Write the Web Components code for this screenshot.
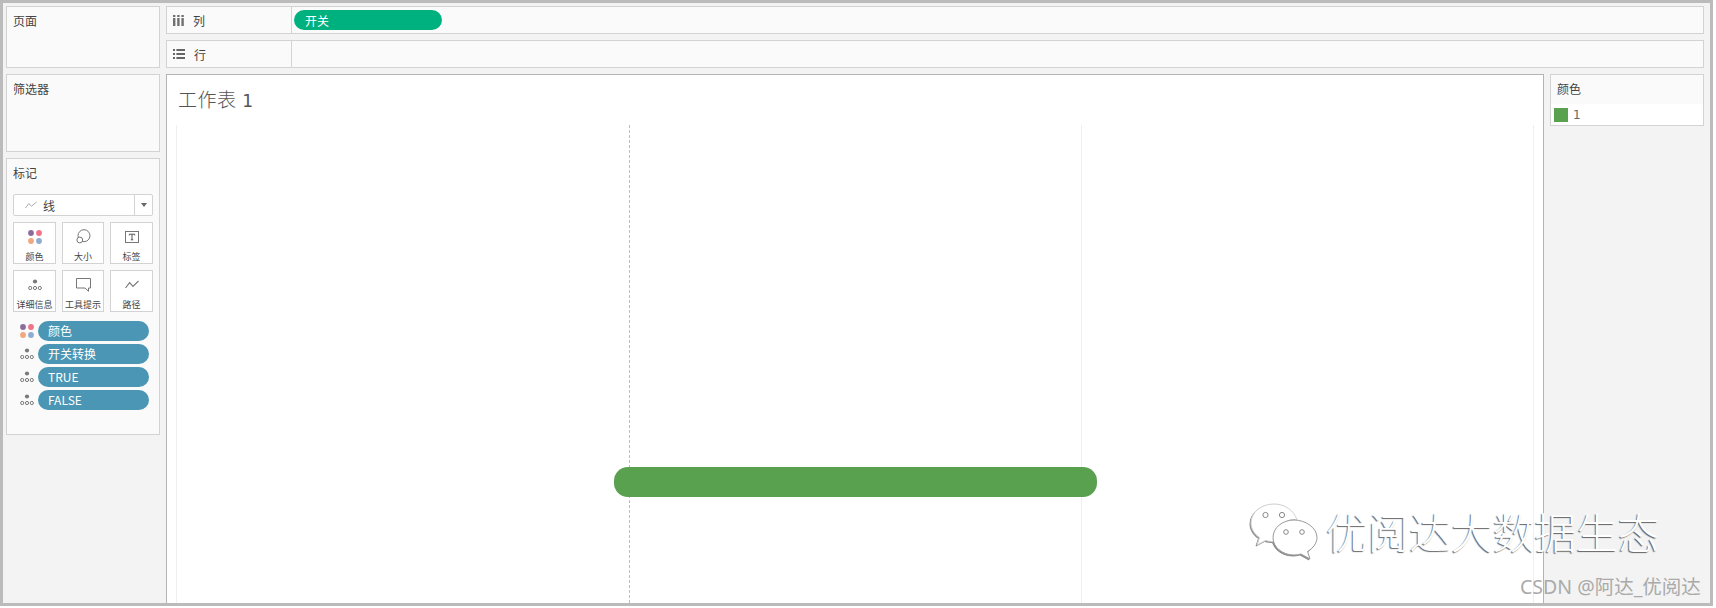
<!DOCTYPE html>
<html lang="zh">
<head>
<meta charset="utf-8">
<title>工作表 1</title>
<style>
    html, body { margin: 0; background: #fff; }
    body { font-family: "Noto Sans CJK SC", "Noto Sans", sans-serif; font-size: 12px; color: #333; }
</style>
</head>
<body>
<tab-app></tab-app>
<script>
const ICONS = {
    color: `<svg width="14" height="14" viewBox="0 0 14 14"><circle cx="3" cy="3" r="2.9" fill="#8a6d9c"/><circle cx="11" cy="3" r="2.9" fill="#f0738a"/><circle cx="3" cy="11" r="2.9" fill="#f3a77c"/><circle cx="11" cy="11" r="2.9" fill="#8fabd0"/></svg>`,
    detail: `<svg width="14" height="12" viewBox="0 0 14 12"><circle cx="7" cy="2.5" r="2.1" fill="#7a7a7a"/><g fill="none" stroke="#7a7a7a"><circle cx="2.2" cy="9" r="1.6"/><circle cx="7" cy="9" r="1.6"/><circle cx="11.8" cy="9" r="1.6"/></g></svg>`,
    size: `<svg width="16" height="16" viewBox="0 0 16 16" fill="none" stroke="#777"><circle cx="9" cy="6.700" r="6"/><circle cx="4.800" cy="11" r="2.900" fill="#fff"/></svg>`,
    label: `<svg width="14" height="12" viewBox="0 0 14 12"><rect x=".5" y=".5" width="13" height="11" fill="none" stroke="#777"/><path d="M4.3 4.400V3.200h5.400v1.200M7 3.200v5.600M5.800 8.800h2.400" fill="none" stroke="#555"/></svg>`,
    tooltip: `<svg width="15" height="14" viewBox="0 0 15 14"><path d="M.5.500h14v9.500h-2v3.300L9 10H.5z" fill="none" stroke="#777"/></svg>`,
    path: `<svg width="14" height="10" viewBox="0 0 14 10"><path d="M.5 8 4.600 2.600 8 6.400 13.500 1" fill="none" stroke="#777" stroke-width="1.100"/></svg>`,
    line: `<svg width="12" height="8" viewBox="0 0 12 8"><path d="M.5 7 3.800 2.600 6.600 5.200 11.500 1" fill="none" stroke="#aaa"/></svg>`,
    cols: `<svg width="11" height="11" viewBox="0 0 11 11" fill="#707070"><rect x="0" y="3" width="2.400" height="8"/><rect x="4.200" y="3" width="2.400" height="8"/><rect x="8.400" y="3" width="2.400" height="8"/><rect x="0" y="0" width="2.400" height="2"/><rect x="4.200" y="0" width="2.400" height="2"/><rect x="8.400" y="0" width="2.400" height="2"/></svg>`,
    rows: `<svg width="12" height="10" viewBox="0 0 12 10" fill="#666"><rect x="0" y="0" width="2" height="2"/><rect x="0" y="4" width="2" height="2"/><rect x="0" y="8" width="2" height="2"/><rect x="3.400" y="0" width="8.600" height="2"/><rect x="3.400" y="4" width="8.600" height="2"/><rect x="3.400" y="8" width="8.600" height="2"/></svg>`
};

// shelf row at the top: icon + caption, then the drop area
class ShelfRow extends HTMLElement {
    connectedCallback() {
        const icon = this.getAttribute('icon');
        const label = this.getAttribute('label');
        this.attachShadow({ mode: 'open' });
        this.shadowRoot.innerHTML = `
            <style>
                :host { display: grid; grid-template-columns: 125px 1fr; box-sizing: border-box; height: 28px; background: #fafafa; border: 1px solid #d3d3d3; }
                .head { display: flex; align-items: center; gap: 9px; padding-left: 6px; border-right: 1px solid #d3d3d3; font-size: 12px; color: #444; }
                .head svg { display: block; }
                .drop { display: flex; align-items: center; padding-left: 2px; }
            </style>
            <div class="head">${ICONS[icon]}<span>${label}</span></div>
            <div class="drop"><slot></slot></div>
        `;
    }
}

class ShelfPill extends HTMLElement {
    connectedCallback() {
        this.attachShadow({ mode: 'open' });
        this.shadowRoot.innerHTML = `
            <style>
                :host { display: flex; align-items: center; box-sizing: border-box; width: 148px; height: 20px; padding-left: 11px; border-radius: 10px; background: #00b180; color: #fff; font-size: 12px; }
            </style>
            <slot></slot>
        `;
    }
}

class SideCard extends HTMLElement {
    connectedCallback() {
        this.attachShadow({ mode: 'open' });
        this.shadowRoot.innerHTML = `
            <style>
                :host { display: block; box-sizing: border-box; height: var(--h, auto); padding: 5px 6px; background: #fafafa; border: 1px solid #d3d3d3; }
                .title { font-size: 12px; line-height: 18px; color: #444; }
            </style>
            <div class="title">${this.getAttribute('title-text')}</div>
            <slot></slot>
        `;
    }
}

class MarkDropdown extends HTMLElement {
    connectedCallback() {
        this.attachShadow({ mode: 'open' });
        this.shadowRoot.innerHTML = `
            <style>
                :host { display: grid; grid-template-columns: 1fr 17px; box-sizing: border-box; height: 22px; margin-top: 12px; background: #fff; border: 1px solid #d3d3d3; border-radius: 2px; }
                .val { display: flex; align-items: center; gap: 6px; padding-left: 11px; border-right: 1px solid #d3d3d3; color: #444; font-size: 12px; }
                .arrow { display: flex; align-items: center; justify-content: center; }
                .arrow i { width: 0; height: 0; border: 3.500px solid transparent; border-top: 4px solid #666; border-bottom: 0; }
            </style>
            <div class="val">${ICONS.line}<span>线</span></div>
            <div class="arrow"><i></i></div>
        `;
    }
}

class MarkButton extends HTMLElement {
    connectedCallback() {
        this.attachShadow({ mode: 'open' });
        this.shadowRoot.innerHTML = `
            <style>
                :host { display: flex; flex-direction: column; align-items: center; box-sizing: border-box; height: 42px; padding-top: 1px; background: #fff; border: 1px solid #d3d3d3; white-space: nowrap; }
                .ico { display: flex; align-items: center; justify-content: center; height: 26px; }
                .cap { font-size: 9px; line-height: 13px; color: #444; }
            </style>
            <div class="ico">${ICONS[this.getAttribute('icon')]}</div>
            <div class="cap"><slot></slot></div>
        `;
    }
}

class MarkField extends HTMLElement {
    connectedCallback() {
        this.attachShadow({ mode: 'open' });
        this.shadowRoot.innerHTML = `
            <style>
                :host { display: grid; grid-template-columns: 25px 111px; align-items: center; height: 20px; }
                .ico { display: flex; justify-content: center; padding-left: 3px; }
                .pill { display: flex; align-items: center; box-sizing: border-box; height: 20px; padding: 0 0 2px 10px; border-radius: 10px; background: #4a96b4; color: #fff; font-size: 12px; }
            </style>
            <div class="ico">${ICONS[this.getAttribute('icon')]}</div>
            <div class="pill"><slot></slot></div>
        `;
    }
}

class LegendCard extends HTMLElement {
    connectedCallback() {
        this.attachShadow({ mode: 'open' });
        this.shadowRoot.innerHTML = `
            <style>
                :host { display: block; box-sizing: border-box; height: 52px; background: #fafafa; border: 1px solid #d3d3d3; }
                .head { height: 29px; padding: 5px 6px 0; box-sizing: border-box; font-size: 12px; line-height: 18px; color: #444; }
                .row { display: flex; align-items: center; gap: 5px; height: 21px; padding-left: 3px; background: #fff; color: #666; font-family: "DejaVu Sans", sans-serif; font-size: 12px; }
                .sw { width: 14px; height: 14px; background: #59a14f; }
            </style>
            <div class="head">颜色</div>
            <div class="row"><span class="sw"></span><span>1</span></div>
        `;
    }
}

// the worksheet: title, pane lines, the one bar
class VizView extends HTMLElement {
    connectedCallback() {
        this.attachShadow({ mode: 'open' });
        this.shadowRoot.innerHTML = `
            <style>
                :host { display: flex; flex-direction: column; box-sizing: border-box; height: 529px; background: #fff; border: 1px solid #b4b4b4; border-bottom: 0; overflow: hidden; }
                .title { height: 50px; box-sizing: border-box; padding: 11px 0 0 11px; font-weight: 300; font-size: 19px; line-height: 26px; letter-spacing: .5px; color: #555; }
                .title b { font-family: "DejaVu Sans", sans-serif; font-weight: 400; font-size: 17px; margin-left: 1px; }
                .panes { position: relative; flex: 1; margin: 0 9px; display: grid; grid-template-columns: 452px 453px 1fr; border-left: 1px solid #efefef; border-right: 1px solid #efefef; }
                .p2 { box-sizing: border-box; border-left: 1px dashed #bdbdbd; border-right: 1px solid #efefef; }
                .bar { position: absolute; left: 437px; top: 342px; width: 483px; height: 30px; border-radius: 14px; background: #59a14f; }
            </style>
            <div class="title">工作表 <b>1</b></div>
            <div class="panes"><div></div><div class="p2"></div><div></div><div class="bar"></div></div>
        `;
    }
}

class WaterMark extends HTMLElement {
    connectedCallback() {
        this.attachShadow({ mode: 'open' });
        this.shadowRoot.innerHTML = `
            <style>
                :host { position: absolute; left: 0; top: 0; width: 1716px; height: 608px; pointer-events: none; }
                .logo { position: absolute; left: 1250px; top: 502px; filter: drop-shadow(-1px 1px .6px rgba(0,0,0,.45)); }
                .brand { position: absolute; left: 1326px; top: 501px; font-size: 41.700px; line-height: 60px; font-weight: 300; color: #fff; white-space: nowrap; text-shadow: -1px 1px 1px rgba(0,0,0,.6); }
                .csdn { position: absolute; left: 1520px; top: 574px; font-family: "Noto Sans", "Noto Sans CJK SC", sans-serif; font-size: 19.500px; line-height: 26px; color: #aaa; white-space: nowrap; }
            </style>
            <svg class="logo" width="68" height="58" viewBox="0 0 68 58">
                <path d="M24 2C11 2 1 10.500 1 21c0 6 3.300 11 8.500 14.600L7 43l8.500-4.500c2.600.7 5.300 1.100 8.500 1.100 1 0 2 0 3-.1C25.500 25 37 15.500 47 18 44 8.500 35 2 24 2z" fill="#fff" stroke="#cfcfcf"/>
                <path d="M44 18c-11.600 0-21 7.800-21 17.500S32.400 53 44 53c2.400 0 4.700-.3 6.900-1L60 57l-2.400-7.500C63.300 46 67 41 67 35.500 67 25.800 55.600 18 44 18z" fill="#fff" stroke="#999"/>
                <g fill="#fff" stroke="#888"><circle cx="15.500" cy="13" r="2.600"/><circle cx="32" cy="13" r="2.600"/><circle cx="36" cy="30" r="2.300"/><circle cx="52" cy="30" r="2.300"/></g>
            </svg>
            <div class="brand">优阅达大数据生态</div>
            <div class="csdn">CSDN @阿达_优阅达</div>
        `;
    }
}

class TabApp extends HTMLElement {
    connectedCallback() {
        this.attachShadow({ mode: 'open' });
        this.shadowRoot.innerHTML = `
            <style>
                :host { display: block; position: relative; width: 1716px; height: 608px; overflow: hidden; }
                .frame { box-sizing: border-box; width: 1713px; height: 606px; border: 3px solid #bbb; padding: 3px 0 0 3px; background: #f3f3f3; overflow: hidden; display: grid; grid-template-columns: 154px 1378px 154px; grid-template-rows: 28px 28px 529px; gap: 6px; }
                .pages { grid-column: 1; grid-row: 1 / 3; --h: 62px; }
                .top { grid-column: 2 / 4; }
                .left { grid-column: 1; grid-row: 3; display: flex; flex-direction: column; gap: 6px; }
                .filters { --h: 78px; }
                .marks { --h: 277px; }
                .btns { display: grid; grid-template-columns: 43px 42px 43px; gap: 6px; margin-top: 6px; }
                .fields { display: flex; flex-direction: column; gap: 3px; margin-top: 9px; }
            </style>
            <div class="frame">
                <side-card class="pages" title-text="页面"></side-card>
                <shelf-row class="top" icon="cols" label="列"><shelf-pill>开关</shelf-pill></shelf-row>
                <shelf-row class="top" icon="rows" label="行"></shelf-row>
                <div class="left">
                    <side-card class="filters" title-text="筛选器"></side-card>
                    <side-card class="marks" title-text="标记">
                        <mark-dropdown></mark-dropdown>
                        <div class="btns">
                            <mark-button icon="color">颜色</mark-button>
                            <mark-button icon="size">大小</mark-button>
                            <mark-button icon="label">标签</mark-button>
                            <mark-button icon="detail">详细信息</mark-button>
                            <mark-button icon="tooltip">工具提示</mark-button>
                            <mark-button icon="path">路径</mark-button>
                        </div>
                        <div class="fields">
                            <mark-field icon="color">颜色</mark-field>
                            <mark-field icon="detail">开关转换</mark-field>
                            <mark-field icon="detail">TRUE</mark-field>
                            <mark-field icon="detail">FALSE</mark-field>
                        </div>
                    </side-card>
                </div>
                <viz-view></viz-view>
                <legend-card></legend-card>
            </div>
            <water-mark></water-mark>
        `;
    }
}

customElements.define('shelf-row', ShelfRow);
customElements.define('shelf-pill', ShelfPill);
customElements.define('side-card', SideCard);
customElements.define('mark-dropdown', MarkDropdown);
customElements.define('mark-button', MarkButton);
customElements.define('mark-field', MarkField);
customElements.define('legend-card', LegendCard);
customElements.define('viz-view', VizView);
customElements.define('water-mark', WaterMark);
customElements.define('tab-app', TabApp);
</script>
</body>
</html>
